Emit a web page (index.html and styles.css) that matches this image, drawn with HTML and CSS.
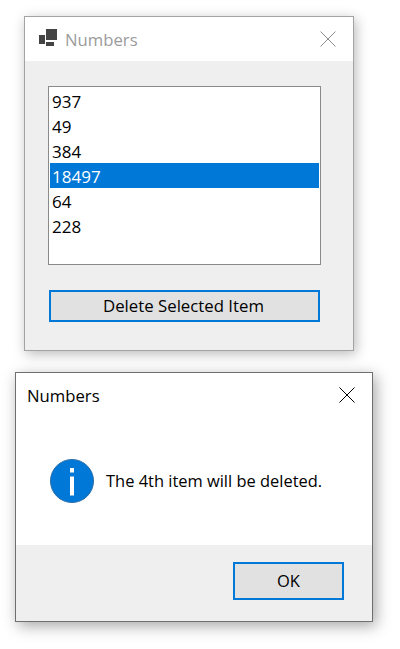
FILE: index.html
```html
<!DOCTYPE html>
<html lang="en">
<head>
<meta charset="utf-8">
<title>Numbers</title>
<link rel="stylesheet" href="styles.css">
</head>
<body>
<section class="window main-window">
  <header class="titlebar main-titlebar">
    <svg class="app-icon" width="20" height="19" viewBox="0 0 20 19" aria-hidden="true">
      <rect x="8" y="1" width="11" height="11" fill="#444"/>
      <rect x="1" y="7" width="6" height="9" fill="#444"/>
      <rect x="8" y="14" width="8" height="4" fill="#444"/>
    </svg>
    <span class="title-text">Numbers</span>
    <svg class="close-icon" width="16" height="16" viewBox="0 0 16 16" aria-hidden="true">
      <path d="M0.5 0.5L15.5 15.5M15.5 0.5L0.5 15.5" stroke="#8c8c8c" stroke-width="1" fill="none"/>
    </svg>
  </header>
  <div class="main-body">
    <ul class="listbox">
      <li class="list-item">937</li>
      <li class="list-item">49</li>
      <li class="list-item">384</li>
      <li class="list-item selected">18497</li>
      <li class="list-item">64</li>
      <li class="list-item">228</li>
    </ul>
    <button class="btn delete-btn" type="button">Delete Selected Item</button>
  </div>
</section>
<section class="window dialog">
  <header class="titlebar dialog-titlebar">
    <span class="dialog-title">Numbers</span>
    <svg class="close-icon" width="16" height="16" viewBox="0 0 16 16" aria-hidden="true">
      <path d="M0.5 0.5L15.5 15.5M15.5 0.5L0.5 15.5" stroke="#000" stroke-width="1" fill="none"/>
    </svg>
  </header>
  <div class="dialog-content">
    <svg class="info-icon" width="44" height="44" viewBox="0 0 44 44" aria-hidden="true">
      <circle cx="22" cy="22" r="21.5" fill="#0078d7" stroke="#2a6ea8" stroke-width="1"/>
      <rect x="20" y="9" width="4" height="4.5" fill="#fff"/>
      <rect x="20" y="17.5" width="4" height="19" fill="#fff"/>
    </svg>
    <p class="message">The 4th item will be deleted.</p>
  </div>
  <footer class="dialog-footer">
    <button class="btn ok-btn" type="button">OK</button>
  </footer>
</section>
</body>
</html>
```
FILE: styles.css
```css
* {
  box-sizing: border-box;
}

html, body {
  margin: 0;
  padding: 0;
  height: 649px;
  overflow: hidden;
  background: #fff;
}

body {
  font-family: "Open Sans", "Noto Sans", sans-serif;
  font-size: 16.5px;
  color: #000;
}

.window {
  display: flex;
  flex-direction: column;
  background: #efefef;
}

.main-window {
  width: 330px;
  height: 335px;
  margin: 16px 0 0 24px;
  border: 1px solid #a3a3a3;
  box-shadow: 2px 3px 12px rgba(0, 0, 0, 0.28);
}

.titlebar {
  display: flex;
  align-items: center;
  background: #fff;
}

.main-titlebar {
  height: 44px;
  padding: 0 17px 0 13px;
}

.app-icon {
  flex: none;
  margin: 0 7px 3px 0;
}

.title-text {
  flex: 1;
  font-size: 16.7px;
  color: #9b9b9b;
}

.close-icon {
  flex: none;
}

.main-body {
  flex: 1;
  padding: 25px 23px 0;
}

.listbox {
  list-style: none;
  width: 273px;
  height: 179px;
  margin: 0;
  padding: 1px;
  border: 1px solid #8a8a8a;
  background: #fff;
}

.list-item {
  height: 25px;
  padding: 1px 0 0 2px;
  line-height: 25px;
  font-size: 17px;
}

.selected {
  background: #0078d7;
  color: #fff;
}

.btn {
  display: block;
  padding: 0 0 2px;
  border: 2px solid #0078d7;
  background: #e1e1e1;
  color: #000;
  font-family: inherit;
  font-size: 16.5px;
}

.delete-btn {
  width: 271px;
  height: 32px;
  margin: 25px 0 0 1px;
  padding-right: 2px;
  font-size: 16.8px;
}

.dialog {
  width: 358px;
  height: 250px;
  margin: 21px 0 0 15px;
  border: 1px solid #6f6f6f;
  box-shadow: 3px 4px 14px rgba(0, 0, 0, 0.35);
}

.dialog-titlebar {
  height: 44px;
  padding: 0 17px 0 11px;
  justify-content: space-between;
}

.dialog-title {
  font-size: 16.7px;
}

.dialog-content {
  flex: 1;
  display: flex;
  align-items: flex-start;
  padding: 42px 0 0 34px;
  background: #fff;
}

.info-icon {
  flex: none;
}

.message {
  margin: 0 0 0 12px;
  line-height: 44px;
  font-size: 16.45px;
}

.dialog-footer {
  flex: none;
  display: flex;
  justify-content: flex-end;
  height: 76px;
  padding: 17px 28px 0 0;
}

.ok-btn {
  width: 111px;
  height: 38px;
}
```
